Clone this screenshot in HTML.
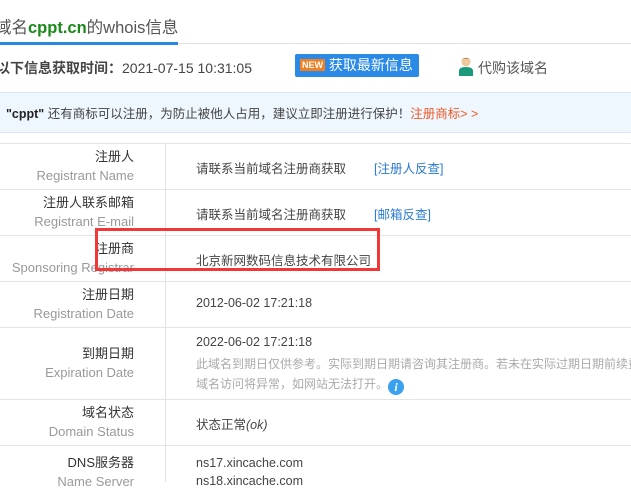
<html><head><style>
body{margin:0;width:631px;height:482px;overflow:hidden;background:#fff;font-family:"Liberation Sans","Noto Sans CJK SC",sans-serif;position:relative;color:#333}
.a{position:absolute;white-space:nowrap}
.hl{position:absolute;left:0;width:631px;height:1px;background:#e4e4e4}
.lc{position:absolute;right:497px;text-align:right;font-size:13px;line-height:19px;white-space:nowrap}
.lc .e{color:#999}
.v{position:absolute;left:196px;font-size:12.5px;white-space:nowrap;color:#444}
</style></head><body>
<div class="a" style="left:-5px;top:14px;font-size:16.5px;color:#555">域名<b style="color:#1a8a1a;font-weight:bold">cppt.cn</b>的whois信息</div>
<div class="hl" style="top:43px;background:#e0e0e0"></div>
<div class="a" style="left:0;top:42px;width:178px;height:3px;background:#2a87e0"></div>
<div class="a" style="left:-4px;top:58px;font-size:14px;color:#444"><b>以下信息获取时间：</b>2021-07-15 10:31:05</div>
<div class="a" style="left:295px;top:54px;width:124px;height:23px;background:#2a8ae6;border-radius:2px;color:#fff;font-size:14px;line-height:23px"><span style="display:inline-block;margin-left:5px;background:#f08020;font-size:9px;font-weight:bold;line-height:12px;padding:0 2px;vertical-align:2px">NEW</span> 获取最新信息</div>
<svg class="a" style="left:458px;top:56px" width="16" height="20"><circle cx="8" cy="6" r="4.5" fill="#f0c8a0"/><path d="M3.5 5C3.5 1 12.5 1 12.5 5L12 3.5C10 2 6 2 4 3.5Z" fill="#5a3a20"/><path d="M1 20V15Q1 11 8 11Q15 11 15 15V20Z" fill="#1a9a7a"/></svg>
<div class="a" style="left:478px;top:58px;font-size:14px;color:#555">代购该域名</div>
<div class="a" style="left:0;top:92px;width:631px;height:39px;background:#eef6fe;border-top:1px solid #d8e8f8;border-bottom:1px solid #d8e8f8"></div>
<div class="a" style="left:6px;top:103px;font-size:12.5px;color:#444"><b style="color:#222">"cppt"</b> 还有商标可以注册，为防止被他人占用，建议立即注册进行保护！<span style="color:#f05a28">注册商标&gt; &gt;</span></div>
<div class="hl" style="top:143px"></div><div class="hl" style="top:189px"></div><div class="hl" style="top:235px"></div><div class="hl" style="top:281px"></div><div class="hl" style="top:327px"></div><div class="hl" style="top:399px"></div><div class="hl" style="top:445px"></div>
<div class="a" style="left:165px;top:143px;width:1px;height:339px;background:#e4e4e4"></div>
<div class="lc" style="top:147px">注册人<div class="e">Registrant Name</div></div>
<div class="lc" style="top:193px">注册人联系邮箱<div class="e">Registrant E-mail</div></div>
<div class="lc" style="top:239px">注册商<div class="e">Sponsoring Registrar</div></div>
<div class="lc" style="top:285px">注册日期<div class="e">Registration Date</div></div>
<div class="lc" style="top:344px">到期日期<div class="e">Expiration Date</div></div>
<div class="lc" style="top:403px">域名状态<div class="e">Domain Status</div></div>
<div class="lc" style="top:453px">DNS服务器<div class="e">Name Server</div></div>
<div class="v" style="top:158px">请联系当前域名注册商获取<span style="color:#2a7ad0;margin-left:28px">[注册人反查]</span></div>
<div class="v" style="top:204px">请联系当前域名注册商获取<span style="color:#2a7ad0;margin-left:28px">[邮箱反查]</span></div>
<div class="v" style="top:250px">北京新网数码信息技术有限公司</div>
<div class="v" style="top:296px">2012-06-02 17:21:18</div>
<div class="v" style="top:335px">2022-06-02 17:21:18</div>
<div class="v" style="top:354px;color:#aaa;font-size:12px;line-height:20px">此域名到期日仅供参考。实际到期日期请咨询其注册商。若未在实际过期日期前续费<br>域名访问将异常，如网站无法打开。<span style="display:inline-block;width:16px;height:16px;border-radius:50%;background:#3aa0f0;color:#fff;font-style:italic;font-weight:bold;text-align:center;line-height:16px;font-family:'Liberation Serif',serif;vertical-align:-3px">i</span></div>
<div class="v" style="top:414px">状态正常<i>(ok)</i></div>
<div class="v" style="top:454px;line-height:18px">ns17.xincache.com<br>ns18.xincache.com</div>
<div class="a" style="left:95px;top:228px;width:279px;height:37px;border:3px solid #f03838"></div>
</body></html>
